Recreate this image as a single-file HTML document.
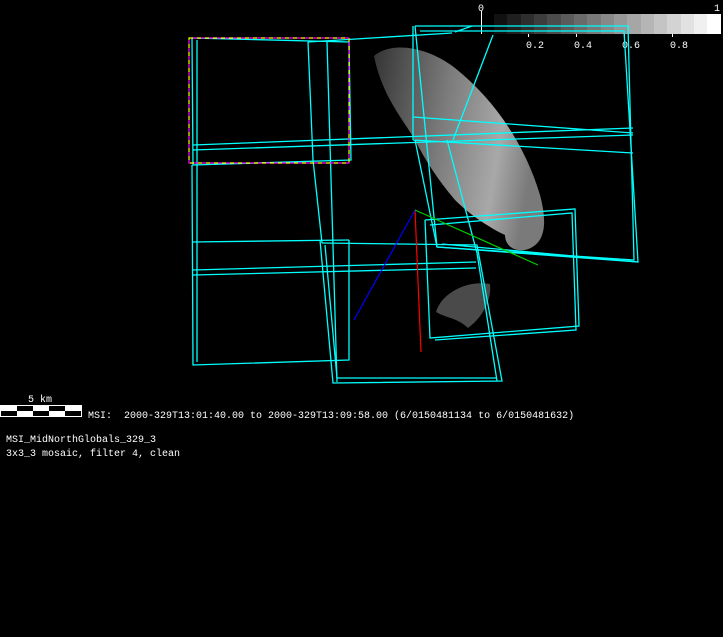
<!DOCTYPE html>
<html><head><meta charset="utf-8"><style>
html,body{margin:0;padding:0;background:#000;width:723px;height:637px;overflow:hidden}
svg{position:absolute;left:0;top:0}
.t{font-family:"Liberation Mono",monospace;font-size:10px;fill:#fff}
</style></head><body>
<svg width="723" height="637" viewBox="0 0 723 637">
<defs>
<linearGradient id="g" x1="0" y1="0" x2="1" y2="0.2">
<stop offset="0" stop-color="#3a3a3a"/><stop offset="0.45" stop-color="#888"/><stop offset="0.8" stop-color="#bbb"/><stop offset="1" stop-color="#888"/>
</linearGradient>
</defs>
<!-- blob -->
<path d="M374,56 C390,42 425,45 455,68 C495,100 525,145 540,195 C548,225 545,245 525,250 C510,252 505,242 505,235 C490,228 470,215 455,200 C438,180 425,160 415,140 C400,115 382,95 374,56 Z" fill="url(#g)" opacity="0.9"/>
<path d="M436,312 C442,292 468,280 490,284 C492,300 482,318 468,328 C458,318 446,318 436,312 Z" fill="#4a4a4a"/>
<!-- colorbar -->
<g shape-rendering="crispEdges">
<rect x="494" y="14" width="14" height="20" fill="#111"/>
<rect x="507" y="14" width="14" height="20" fill="#1f1f1f"/>
<rect x="521" y="14" width="14" height="20" fill="#2e2e2e"/>
<rect x="534" y="14" width="14" height="20" fill="#3d3d3d"/>
<rect x="547" y="14" width="14" height="20" fill="#4c4c4c"/>
<rect x="561" y="14" width="14" height="20" fill="#5b5b5b"/>
<rect x="574" y="14" width="14" height="20" fill="#6a6a6a"/>
<rect x="587" y="14" width="14" height="20" fill="#797979"/>
<rect x="601" y="14" width="14" height="20" fill="#888"/>
<rect x="614" y="14" width="14" height="20" fill="#979797"/>
<rect x="627" y="14" width="14" height="20" fill="#a6a6a6"/>
<rect x="641" y="14" width="14" height="20" fill="#b5b5b5"/>
<rect x="654" y="14" width="14" height="20" fill="#c4c4c4"/>
<rect x="667" y="14" width="14" height="20" fill="#d3d3d3"/>
<rect x="681" y="14" width="14" height="20" fill="#e2e2e2"/>
<rect x="694" y="14" width="14" height="20" fill="#f0f0f0"/>
<rect x="707" y="14" width="14" height="20" fill="#fff"/>
<rect x="481" y="11" width="1" height="23" fill="#fff"/>
<rect x="528" y="34" width="1" height="3" fill="#fff"/>
<rect x="576" y="34" width="1" height="3" fill="#fff"/>
<rect x="624" y="34" width="1" height="3" fill="#fff"/>
<rect x="672" y="34" width="1" height="3" fill="#fff"/>
</g>
<text class="t" x="478" y="11">0</text>
<text class="t" x="714" y="11">1</text>
<text class="t" x="526" y="48">0.2</text>
<text class="t" x="574" y="48">0.4</text>
<text class="t" x="622" y="48">0.6</text>
<text class="t" x="670" y="48">0.8</text>
<!-- wireframes -->
<g fill="none" stroke="#0ff" stroke-width="1.3">
<polyline points="415,26 628,26 634,260 437,247 415,26"/>
<polyline points="420,31 624,31 638,262 442,244"/>
<polyline points="472,26 455,32"/>
<polyline points="493,35 453,140"/>
<polyline points="192,38 349,42 351,160 193,165 192,38"/>
<polyline points="192,165 193,365 349,360 349,240"/>
<polyline points="197,40 197,362"/>
<polyline points="193,145 633,128"/>
<polyline points="193,150 633,135"/>
<polyline points="413,117 633,133"/>
<polyline points="413,140 633,153"/>
<polyline points="192,242 349,240"/>
<polyline points="193,270 476,262"/>
<polyline points="193,275 476,268"/>
<polyline points="308,42 452,33"/>
<polyline points="308,42 313,160 322,243"/>
<polyline points="327,42 337,382"/>
<polyline points="320,240 333,383 502,381 477,245 322,243"/>
<polyline points="325,245 337,378 497,378"/>
<polyline points="425,220 575,209 579,326 430,338 425,220"/>
<polyline points="430,225 572,213 576,330 435,340"/>
<polyline points="415,140 437,247"/>
<polyline points="447,140 477,253 497,381"/>
<polyline points="437,247 638,262"/>
<polyline points="413,26 413,140"/>
</g>
<g fill="none" stroke-dasharray="4,4">
<rect x="189" y="38" width="160" height="125" stroke="#ff0" stroke-width="1.2"/>
<rect x="189" y="38" width="160" height="125" stroke="#f0f" stroke-width="1.2" stroke-dashoffset="4"/>
</g>
<line x1="415" y1="210" x2="421" y2="352" stroke="#f00" stroke-width="1.2"/>
<line x1="415" y1="210" x2="354" y2="320" stroke="#00f" stroke-width="1.2"/>
<line x1="415" y1="210" x2="538" y2="265" stroke="#0c0" stroke-width="1.2"/>
<!-- scale bar -->
<g shape-rendering="crispEdges">
<rect x="0" y="405" width="82" height="12" fill="#fff"/>
<rect x="1" y="406" width="80" height="10" fill="#000"/>
<rect x="1" y="406" width="16" height="5" fill="#fff"/>
<rect x="33" y="406" width="16" height="5" fill="#fff"/>
<rect x="65" y="406" width="16" height="5" fill="#fff"/>
<rect x="17" y="411" width="16" height="5" fill="#fff"/>
<rect x="49" y="411" width="16" height="5" fill="#fff"/>
</g>
<text class="t" x="28" y="402">5 km</text>
<text class="t" x="88" y="418" xml:space="preserve">MSI:  2000-329T13:01:40.00 to 2000-329T13:09:58.00 (6/0150481134 to 6/0150481632)</text>
<text class="t" x="6" y="442">MSI_MidNorthGlobals_329_3</text>
<text class="t" x="6" y="456">3x3_3 mosaic, filter 4, clean</text>
</svg>
</body></html>
